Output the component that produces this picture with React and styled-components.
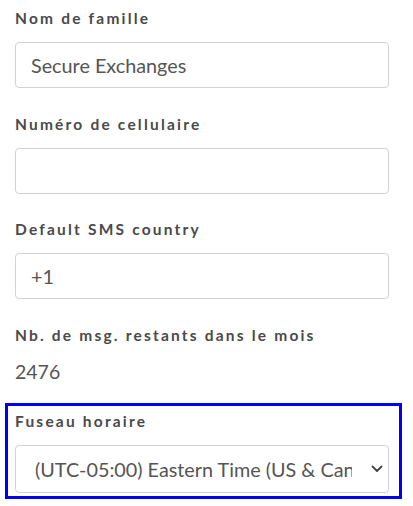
import React from "react";
import styled, { createGlobalStyle } from "styled-components";

const Global = createGlobalStyle`
  html, body { margin: 0; padding: 0; background: #fff; }
  body { font-family: Lato, "Open Sans", sans-serif; }
  * { box-sizing: border-box; }
`;

const Form = styled.div`
  width: 413px;
  padding: 8px 24px 0 15px;
  display: flex;
  flex-direction: column;
`;

const Group = styled.div`
  display: flex;
  flex-direction: column;
  margin-bottom: ${(p) => p.$mb ?? 25.5}px;
`;

const Label = styled.label`
  font-family: Lato, sans-serif;
  font-weight: 700;
  font-size: 15.5px;
  line-height: 20px;
  letter-spacing: 2.2px;
  color: #4a4a4a;
  margin-bottom: 14px;
  white-space: nowrap;
`;

const Input = styled.input`
  height: 46px;
  width: 100%;
  border: 1px solid #cfd2d8;
  border-radius: 4px;
  padding: 0 15px;
  font-family: Lato, sans-serif;
  font-size: 19.8px;
  color: #555;
  outline: none;
  background: #fff;
`;

const Value = styled.div`
  font-family: Lato, sans-serif;
  font-size: 19.5px;
  line-height: 26px;
  color: #555;
`;

const Highlight = styled.div`
  margin: 0 -13px 0 -10px;
  border: 3px solid #0000f5;
  padding: 5px 10px 3px 7px;
  display: flex;
  flex-direction: column;
`;

const SelectWrap = styled.div`
  position: relative;
  height: 48px;
`;

const Select = styled.select`
  appearance: none;
  -webkit-appearance: none;
  height: 48px;
  width: 100%;
  border: 1px solid #cfd2d8;
  border-radius: 4px;
  padding: 0 36px 0 19px;
  font-family: Lato, sans-serif;
  font-size: 19.8px;
  color: #555;
  background: #fff;
  outline: none;
`;

const Chevron = styled.svg`
  position: absolute;
  right: 6px;
  top: 20px;
  width: 12px;
  height: 8px;
  pointer-events: none;
`;

export default function App() {
  return (
    <>
      <Global />
      <Form>
        <Group>
          <Label>Nom de famille</Label>
          <Input defaultValue="Secure Exchanges" />
        </Group>
        <Group>
          <Label>Numéro de cellulaire</Label>
          <Input defaultValue="" />
        </Group>
        <Group>
          <Label>Default SMS country</Label>
          <Input defaultValue="+1" />
        </Group>
        <Group $mb={18}>
          <Label>Nb. de msg. restants dans le mois</Label>
          <Value>2476</Value>
        </Group>
        <Highlight>
          <Label>Fuseau horaire</Label>
          <SelectWrap>
            <Select defaultValue="est">
              <option value="est">(UTC-05:00) Eastern Time (US &amp; Canada)</option>
            </Select>
            <Chevron viewBox="0 0 12 8">
              <path d="M1.5 1.5 L6 6 L10.5 1.5" fill="none" stroke="#444" strokeWidth="1.8" strokeLinecap="round" strokeLinejoin="round" />
            </Chevron>
          </SelectWrap>
        </Highlight>
      </Form>
    </>
  );
}
